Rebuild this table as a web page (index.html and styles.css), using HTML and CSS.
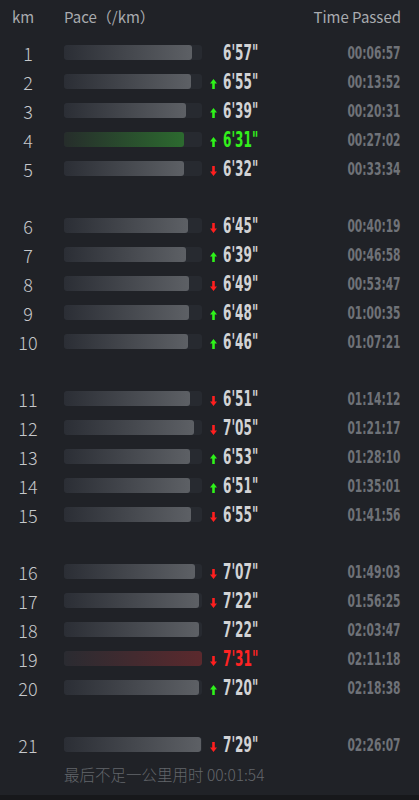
FILE: index.html
```html
<!DOCTYPE html>
<html>
<head>
<meta charset="utf-8">
<link rel="stylesheet" href="styles.css">
</head>
<body>
<div class="screen">
  <div class="header">
    <span class="h-km">km</span>
    <span class="h-pace">Pace（/km）</span>
    <span class="h-time">Time Passed</span>
  </div>

  <div class="group">
    <div class="row"><span class="km">1</span><div class="track"><div class="bar" style="width:92.5%"></div></div><span class="arrow"></span><span class="pace"><span class="pt">6'57"</span></span><span class="time"><span class="tt">00:06:57</span></span></div>
    <div class="row"><span class="km">2</span><div class="track"><div class="bar" style="width:92.0%"></div></div><span class="arrow up"><svg viewBox="0 0 7 10"><polygon points="3.5,0 7,4.5 4.8,4.5 4.8,10 2.2,10 2.2,4.5 0,4.5"/></svg></span><span class="pace"><span class="pt">6'55"</span></span><span class="time"><span class="tt">00:13:52</span></span></div>
    <div class="row"><span class="km">3</span><div class="track"><div class="bar" style="width:88.5%"></div></div><span class="arrow up"><svg viewBox="0 0 7 10"><polygon points="3.5,0 7,4.5 4.8,4.5 4.8,10 2.2,10 2.2,4.5 0,4.5"/></svg></span><span class="pace"><span class="pt">6'39"</span></span><span class="time"><span class="tt">00:20:31</span></span></div>
    <div class="row best"><span class="km">4</span><div class="track"><div class="bar" style="width:86.7%"></div></div><span class="arrow up"><svg viewBox="0 0 7 10"><polygon points="3.5,0 7,4.5 4.8,4.5 4.8,10 2.2,10 2.2,4.5 0,4.5"/></svg></span><span class="pace"><span class="pt">6'31"</span></span><span class="time"><span class="tt">00:27:02</span></span></div>
    <div class="row"><span class="km">5</span><div class="track"><div class="bar" style="width:86.9%"></div></div><span class="arrow down"><svg viewBox="0 0 7 10"><polygon points="3.5,10 7,5.5 4.8,5.5 4.8,0 2.2,0 2.2,5.5 0,5.5"/></svg></span><span class="pace"><span class="pt">6'32"</span></span><span class="time"><span class="tt">00:33:34</span></span></div>
  </div>

  <div class="group">
    <div class="row"><span class="km">6</span><div class="track"><div class="bar" style="width:89.8%"></div></div><span class="arrow down"><svg viewBox="0 0 7 10"><polygon points="3.5,10 7,5.5 4.8,5.5 4.8,0 2.2,0 2.2,5.5 0,5.5"/></svg></span><span class="pace"><span class="pt">6'45"</span></span><span class="time"><span class="tt">00:40:19</span></span></div>
    <div class="row"><span class="km">7</span><div class="track"><div class="bar" style="width:88.5%"></div></div><span class="arrow up"><svg viewBox="0 0 7 10"><polygon points="3.5,0 7,4.5 4.8,4.5 4.8,10 2.2,10 2.2,4.5 0,4.5"/></svg></span><span class="pace"><span class="pt">6'39"</span></span><span class="time"><span class="tt">00:46:58</span></span></div>
    <div class="row"><span class="km">8</span><div class="track"><div class="bar" style="width:90.7%"></div></div><span class="arrow down"><svg viewBox="0 0 7 10"><polygon points="3.5,10 7,5.5 4.8,5.5 4.8,0 2.2,0 2.2,5.5 0,5.5"/></svg></span><span class="pace"><span class="pt">6'49"</span></span><span class="time"><span class="tt">00:53:47</span></span></div>
    <div class="row"><span class="km">9</span><div class="track"><div class="bar" style="width:90.5%"></div></div><span class="arrow up"><svg viewBox="0 0 7 10"><polygon points="3.5,0 7,4.5 4.8,4.5 4.8,10 2.2,10 2.2,4.5 0,4.5"/></svg></span><span class="pace"><span class="pt">6'48"</span></span><span class="time"><span class="tt">01:00:35</span></span></div>
    <div class="row"><span class="km">10</span><div class="track"><div class="bar" style="width:90.0%"></div></div><span class="arrow up"><svg viewBox="0 0 7 10"><polygon points="3.5,0 7,4.5 4.8,4.5 4.8,10 2.2,10 2.2,4.5 0,4.5"/></svg></span><span class="pace"><span class="pt">6'46"</span></span><span class="time"><span class="tt">01:07:21</span></span></div>
  </div>

  <div class="group">
    <div class="row"><span class="km">11</span><div class="track"><div class="bar" style="width:91.1%"></div></div><span class="arrow down"><svg viewBox="0 0 7 10"><polygon points="3.5,10 7,5.5 4.8,5.5 4.8,0 2.2,0 2.2,5.5 0,5.5"/></svg></span><span class="pace"><span class="pt">6'51"</span></span><span class="time"><span class="tt">01:14:12</span></span></div>
    <div class="row"><span class="km">12</span><div class="track"><div class="bar" style="width:94.2%"></div></div><span class="arrow down"><svg viewBox="0 0 7 10"><polygon points="3.5,10 7,5.5 4.8,5.5 4.8,0 2.2,0 2.2,5.5 0,5.5"/></svg></span><span class="pace"><span class="pt">7'05"</span></span><span class="time"><span class="tt">01:21:17</span></span></div>
    <div class="row"><span class="km">13</span><div class="track"><div class="bar" style="width:91.6%"></div></div><span class="arrow up"><svg viewBox="0 0 7 10"><polygon points="3.5,0 7,4.5 4.8,4.5 4.8,10 2.2,10 2.2,4.5 0,4.5"/></svg></span><span class="pace"><span class="pt">6'53"</span></span><span class="time"><span class="tt">01:28:10</span></span></div>
    <div class="row"><span class="km">14</span><div class="track"><div class="bar" style="width:91.1%"></div></div><span class="arrow up"><svg viewBox="0 0 7 10"><polygon points="3.5,0 7,4.5 4.8,4.5 4.8,10 2.2,10 2.2,4.5 0,4.5"/></svg></span><span class="pace"><span class="pt">6'51"</span></span><span class="time"><span class="tt">01:35:01</span></span></div>
    <div class="row"><span class="km">15</span><div class="track"><div class="bar" style="width:92.0%"></div></div><span class="arrow down"><svg viewBox="0 0 7 10"><polygon points="3.5,10 7,5.5 4.8,5.5 4.8,0 2.2,0 2.2,5.5 0,5.5"/></svg></span><span class="pace"><span class="pt">6'55"</span></span><span class="time"><span class="tt">01:41:56</span></span></div>
  </div>

  <div class="group">
    <div class="row"><span class="km">16</span><div class="track"><div class="bar" style="width:94.7%"></div></div><span class="arrow down"><svg viewBox="0 0 7 10"><polygon points="3.5,10 7,5.5 4.8,5.5 4.8,0 2.2,0 2.2,5.5 0,5.5"/></svg></span><span class="pace"><span class="pt">7'07"</span></span><span class="time"><span class="tt">01:49:03</span></span></div>
    <div class="row"><span class="km">17</span><div class="track"><div class="bar" style="width:98.0%"></div></div><span class="arrow down"><svg viewBox="0 0 7 10"><polygon points="3.5,10 7,5.5 4.8,5.5 4.8,0 2.2,0 2.2,5.5 0,5.5"/></svg></span><span class="pace"><span class="pt">7'22"</span></span><span class="time"><span class="tt">01:56:25</span></span></div>
    <div class="row"><span class="km">18</span><div class="track"><div class="bar" style="width:98.0%"></div></div><span class="arrow"></span><span class="pace"><span class="pt">7'22"</span></span><span class="time"><span class="tt">02:03:47</span></span></div>
    <div class="row worst"><span class="km">19</span><div class="track"><div class="bar" style="width:100%"></div></div><span class="arrow down"><svg viewBox="0 0 7 10"><polygon points="3.5,10 7,5.5 4.8,5.5 4.8,0 2.2,0 2.2,5.5 0,5.5"/></svg></span><span class="pace"><span class="pt">7'31"</span></span><span class="time"><span class="tt">02:11:18</span></span></div>
    <div class="row"><span class="km">20</span><div class="track"><div class="bar" style="width:97.6%"></div></div><span class="arrow up"><svg viewBox="0 0 7 10"><polygon points="3.5,0 7,4.5 4.8,4.5 4.8,10 2.2,10 2.2,4.5 0,4.5"/></svg></span><span class="pace"><span class="pt">7'20"</span></span><span class="time"><span class="tt">02:18:38</span></span></div>
  </div>

  <div class="group">
    <div class="row"><span class="km">21</span><div class="track"><div class="bar" style="width:99.6%"></div></div><span class="arrow down"><svg viewBox="0 0 7 10"><polygon points="3.5,10 7,5.5 4.8,5.5 4.8,0 2.2,0 2.2,5.5 0,5.5"/></svg></span><span class="pace"><span class="pt">7'29"</span></span><span class="time"><span class="tt">02:26:07</span></span></div>
  </div>

  <div class="footer">最后不足一公里用时 00:01:54</div>
</div>
</body>
</html>
```

FILE: styles.css
```css
html, body {
  margin: 0;
  padding: 0;
  background: #17181b;
}

.screen {
  height: 795px;
  background: #202227;
  overflow: hidden;
  font-family: "Noto Sans", "Noto Sans CJK SC", sans-serif;
}

.header {
  display: flex;
  align-items: center;
  height: 20px;
  padding: 6px 18px 12px 12px;
  color: #a9abaf;
  font-size: 15px;
  font-family: "Noto Sans CJK SC", "Noto Sans", sans-serif;
}

.h-km {
  width: 52px;
}

.h-pace {
  flex: 1;
}

.group {
  display: flex;
  flex-direction: column;
  margin-bottom: 28px;
}

.row {
  display: flex;
  align-items: center;
  height: 29px;
  padding-right: 18px;
}

.km {
  width: 56px;
  margin-right: 8px;
  text-align: center;
  color: #c6c8cb;
  font-size: 18px;
  font-family: "Noto Sans CJK SC", "Noto Sans", sans-serif;
  font-weight: 300;
}

.track {
  width: 138px;
  height: 15px;
  border-radius: 3px;
  background: #272a30;
  overflow: hidden;
}

.bar {
  height: 100%;
  border-radius: 3px;
  background: linear-gradient(to right, #2b2e35, #5d6065);
}

.best .bar {
  background: linear-gradient(to right, #262d2b, #2c6a2f);
}

.worst .bar {
  background: linear-gradient(to right, #2a2b31, #5b292d);
}

.arrow {
  width: 21px;
  height: 10px;
  display: flex;
  justify-content: center;
  padding-left: 2px;
  box-sizing: border-box;
  margin-top: 4px;
}

.arrow svg {
  width: 7px;
  height: 10px;
  display: block;
}

.arrow.up svg {
  fill: #2ef21a;
}

.arrow.down svg {
  fill: #ff1f1f;
}

.pace {
  flex: 1;
  height: 29px;
  display: flex;
  align-items: center;
}

.pt {
  display: inline-block;
  font-family: "DejaVu Sans Condensed", "DejaVu Sans", sans-serif;
  font-weight: bold;
  font-size: 21px;
  color: #d2d3d5;
  transform: scaleX(0.64);
  transform-origin: left center;
}

.best .pt {
  color: #33ef1c;
}

.worst .pt {
  color: #ff2323;
}

.time {
  display: flex;
  align-items: center;
}

.tt {
  display: inline-block;
  font-family: "DejaVu Sans Condensed", "DejaVu Sans", sans-serif;
  font-weight: bold;
  font-size: 18px;
  color: #6f7278;
  transform: scaleX(0.66);
  transform-origin: right center;
}

.footer {
  margin-top: -28px;
  padding: 4px 0 0 64px;
  color: #63666b;
  font-size: 15.5px;
  font-family: "Noto Sans CJK SC", "Noto Sans", sans-serif;
  font-weight: 300;
}
```
